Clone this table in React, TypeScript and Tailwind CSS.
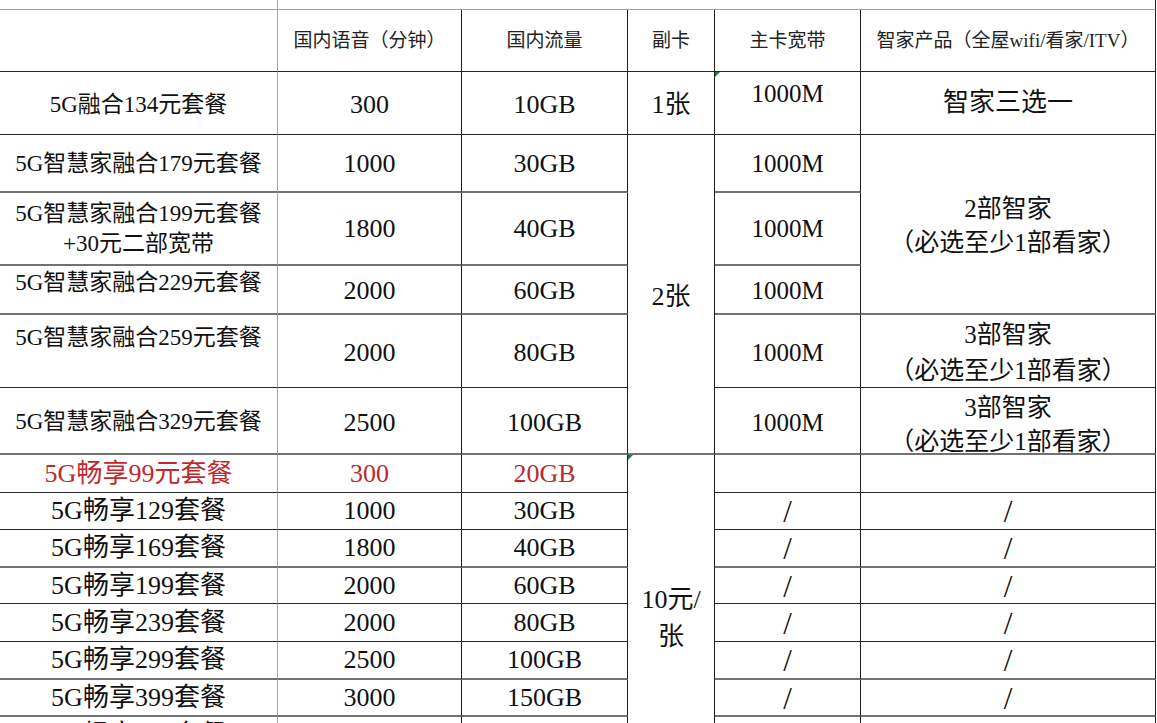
import React from "react";
import clsx from "clsx";
import { twMerge } from "tailwind-merge";

type Line = "d" | "g";

const bottom: Record<Line, string> = {
  d: "border-b border-b-[#262626]",
  g: "border-b-2 border-b-[#727272]",
};

function Cell({
  children,
  line = "d",
  className = "",
}: {
  children?: React.ReactNode;
  line?: Line;
  className?: string;
}) {
  return (
    <div
      className={twMerge(
        clsx(
          "flex items-center justify-center text-center overflow-hidden border-r border-r-[#1c1c1c] text-[#111]",
          bottom[line],
          className
        )
      )}
    >
      {children}
    </div>
  );
}

// first column has the teal grid line on its right
const first = "border-r-[#86b8b3]";

const changxiang = [
  { name: "5G畅享129套餐", voice: "1000", data: "30GB", line: "d" as Line },
  { name: "5G畅享169套餐", voice: "1800", data: "40GB", line: "g" as Line },
  { name: "5G畅享199套餐", voice: "2000", data: "60GB", line: "d" as Line },
  { name: "5G畅享239套餐", voice: "2000", data: "80GB", line: "d" as Line },
  { name: "5G畅享299套餐", voice: "2500", data: "100GB", line: "g" as Line },
  { name: "5G畅享399套餐", voice: "3000", data: "150GB", line: "g" as Line },
  { name: "5G畅享599套餐", voice: "5000", data: "300GB", line: "d" as Line },
  { name: "5G畅享699套餐", voice: "6000", data: "400GB", line: "d" as Line },
];

function Corner() {
  return (
    <span className="absolute left-0 top-0 h-0 w-0 border-t-[5px] border-r-[5px] border-t-[#1f7a3a] border-r-transparent" />
  );
}

export default function App() {
  const num = "text-[26px] leading-[30px]";
  const label = "text-[23px] leading-[30px]";
  const head = "text-[19px] leading-[24px] text-[#222]";
  const slash = "text-[31px] leading-[30px] pt-[2px]";

  return (
    <div className="h-[723px] w-[1157px] overflow-hidden bg-white font-['Liberation_Serif','Noto_Sans_CJK_SC',serif]">
      <div className="grid grid-cols-[278px_184px_166px_87px_146px_295px] grid-rows-[10px_62px_63px_58px_73px_49px_73px_67px_38px_37px_38px_36px_38px_38px_37px_37px_37px]">
        {/* cut-off title row */}
        <Cell className={twMerge(first, "border-b-[#8aa9a6]")} />
        <Cell className="col-span-5 items-end border-b-[#8aa9a6]">
          <span className="mb-[-21px] text-[20px] leading-[20px] text-[#dadada]">
            5G融合套餐及5G畅享套餐资费一览表
          </span>
        </Cell>

        {/* header */}
        <Cell className={first} />
        <Cell className={head}>国内语音（分钟）</Cell>
        <Cell className={head}>国内流量</Cell>
        <Cell className={head}>副卡</Cell>
        <Cell className={head}>主卡宽带</Cell>
        <Cell className={head}>智家产品（全屋wifi/看家/ITV）</Cell>

        {/* 134 */}
        <Cell className={twMerge(first, label, "pt-[4px]")}>5G融合134元套餐</Cell>
        <Cell className={twMerge(num, "pt-[4px]")}>300</Cell>
        <Cell className={twMerge(num, "pt-[4px]")}>10GB</Cell>
        <Cell className={twMerge(num, "pt-[4px]")}>1张</Cell>
        <Cell className="relative items-start pt-[7px] text-[25px] leading-[30px]">
          <Corner />
          1000M
        </Cell>
        <Cell className="text-[26px] leading-[32px]">智家三选一</Cell>

        {/* 179 */}
        <Cell line="g" className={twMerge(first, label, "pt-[2px]")}>5G智慧家融合179元套餐</Cell>
        <Cell line="g" className={twMerge(num, "pt-[2px]")}>1000</Cell>
        <Cell line="g" className={twMerge(num, "pt-[2px]")}>30GB</Cell>
        <Cell line="g" className={twMerge("row-span-5 pt-[6px]", num)}>2张</Cell>
        <Cell line="g" className="text-[25px] leading-[30px] pt-[2px]">1000M</Cell>
        <Cell line="g" className="row-span-3 flex-col text-[25px] leading-[34px] pt-[4px]">
          <span>2部智家</span>
          <span>（必选至少1部看家）</span>
        </Cell>

        {/* 199 */}
        <Cell line="g" className={twMerge(first, "flex-col text-[23px] leading-[30px]")}>
          <span>5G智慧家融合199元套餐</span>
          <span>+30元二部宽带</span>
        </Cell>
        <Cell line="g" className={num}>1800</Cell>
        <Cell line="g" className={num}>40GB</Cell>
        <Cell line="g" className="text-[25px] leading-[30px]">1000M</Cell>

        {/* 229 */}
        <Cell line="g" className={twMerge(first, label, "items-start pt-[2px]")}>5G智慧家融合229元套餐</Cell>
        <Cell line="g" className={twMerge(num, "pt-[2px]")}>2000</Cell>
        <Cell line="g" className={twMerge(num, "pt-[2px]")}>60GB</Cell>
        <Cell line="g" className="text-[25px] leading-[30px] pt-[2px]">1000M</Cell>

        {/* 259 */}
        <Cell className={twMerge(first, label, "items-start pt-[8px]")}>5G智慧家融合259元套餐</Cell>
        <Cell className={twMerge(num, "pt-[4px]")}>2000</Cell>
        <Cell className={twMerge(num, "pt-[4px]")}>80GB</Cell>
        <Cell className="text-[25px] leading-[30px] pt-[4px]">1000M</Cell>
        <Cell className="flex-col text-[25px] leading-[36px] pt-[3px]">
          <span>3部智家</span>
          <span>（必选至少1部看家）</span>
        </Cell>

        {/* 329 */}
        <Cell line="g" className={twMerge(first, label, "pt-[2px]")}>5G智慧家融合329元套餐</Cell>
        <Cell line="g" className={twMerge(num, "pt-[4px]")}>2500</Cell>
        <Cell line="g" className={twMerge(num, "pt-[4px]")}>100GB</Cell>
        <Cell line="g" className="text-[25px] leading-[30px] pt-[4px]">1000M</Cell>
        <Cell line="g" className="flex-col justify-start text-[25px] leading-[34px] pt-[3px]">
          <span>3部智家</span>
          <span className="shrink-0">（必选至少1部看家）</span>
        </Cell>

        {/* 99 */}
        <Cell className={twMerge(first, "text-[26px] leading-[30px] text-[#c0282d]")}>5G畅享99元套餐</Cell>
        <Cell className={twMerge(num, "text-[#c0282d]")}>300</Cell>
        <Cell className={twMerge(num, "text-[#c0282d]")}>20GB</Cell>
        <Cell className="relative row-span-9 flex-col pb-[10px] text-[26px] leading-[37px]">
          <Corner />
          <span>10元/</span>
          <span>张</span>
        </Cell>
        <Cell />
        <Cell />

        {changxiang.map((r) => (
          <React.Fragment key={r.name}>
            <Cell line={r.line} className={twMerge(first, "text-[26px] leading-[30px]")}>
              {r.name}
            </Cell>
            <Cell line={r.line} className={num}>{r.voice}</Cell>
            <Cell line={r.line} className={num}>{r.data}</Cell>
            <Cell line={r.line} className={slash}>/</Cell>
            <Cell line={r.line} className={slash}>/</Cell>
          </React.Fragment>
        ))}
      </div>
    </div>
  );
}
